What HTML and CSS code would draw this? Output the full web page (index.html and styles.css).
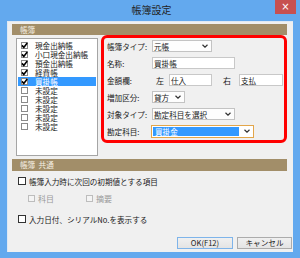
FILE: index.html
```html
<!DOCTYPE html>
<html lang="ja">
<head>
<meta charset="utf-8">
<link rel="stylesheet" href="styles.css">
</head>
<body>
<div class="window">
  <div class="titlebar">
    <span></span>
    <span class="title">帳簿設定</span>
    <span class="close">×</span>
  </div>
  <div class="client">
    <div class="bar">帳簿</div>
    <div class="top">
      <ul class="list">
        <li><span class="cb on"><svg viewBox="0 0 7 7"><polyline points="1,3.4 2.8,5.4 6.2,1"/></svg></span>現金出納帳</li>
        <li><span class="cb on"><svg viewBox="0 0 7 7"><polyline points="1,3.4 2.8,5.4 6.2,1"/></svg></span>小口現金出納帳</li>
        <li><span class="cb on"><svg viewBox="0 0 7 7"><polyline points="1,3.4 2.8,5.4 6.2,1"/></svg></span>預金出納帳</li>
        <li><span class="cb on"><svg viewBox="0 0 7 7"><polyline points="1,3.4 2.8,5.4 6.2,1"/></svg></span>経費帳</li>
        <li class="sel"><span class="cb on"><svg viewBox="0 0 7 7"><polyline points="1,3.4 2.8,5.4 6.2,1"/></svg></span>買掛帳</li>
        <li><span class="cb"></span>未設定</li>
        <li><span class="cb"></span>未設定</li>
        <li><span class="cb"></span>未設定</li>
        <li><span class="cb"></span>未設定</li>
        <li><span class="cb"></span>未設定</li>
      </ul>
      <div class="panel">
        <div class="row">
          <span class="lbl">帳簿タイプ:</span>
          <span class="select w60">元帳<svg class="arr" viewBox="0 0 6 4"><polyline points="0.5,0.8 3,3.2 5.5,0.8"/></svg></span>
        </div>
        <div class="row">
          <span class="lbl">名称:</span>
          <span class="input w83">買掛帳</span>
        </div>
        <div class="row">
          <span class="lbl">金額欄:</span>
          <span class="side">左</span>
          <span class="input w43">仕入</span>
          <span class="side right">右</span>
          <span class="input w44">支払</span>
        </div>
        <div class="row">
          <span class="lbl">増加区分:</span>
          <span class="select w33">貸方<svg class="arr" viewBox="0 0 6 4"><polyline points="0.5,0.8 3,3.2 5.5,0.8"/></svg></span>
        </div>
        <div class="row">
          <span class="lbl">対象タイプ:</span>
          <span class="select w83">勘定科目を選択<svg class="arr" viewBox="0 0 6 4"><polyline points="0.5,0.8 3,3.2 5.5,0.8"/></svg></span>
        </div>
        <div class="row">
          <span class="lbl">勘定科目:</span>
          <span class="combo"><span class="hl">買掛金</span><svg class="arr" viewBox="0 0 6 4"><polyline points="0.5,0.8 3,3.2 5.5,0.8"/></svg></span>
        </div>
      </div>
    </div>
    <div class="bar bar2">帳簿&nbsp;&nbsp;共通</div>
    <div class="chk first"><span class="box"></span>帳簿入力時に次回の初期値とする項目</div>
    <div class="subs">
      <span class="sub"><span class="box dis"></span>科目</span>
      <span class="sub"><span class="box dis"></span>摘要</span>
    </div>
    <div class="chk second"><span class="box"></span>入力日付、シリアルNo.を表示する</div>
    <div class="buttons">
      <span class="btn ok">OK(F12)</span>
      <span class="btn cancel">キャンセル</span>
    </div>
  </div>
</div>
</body>
</html>
```

FILE: styles.css
```css
* { box-sizing: border-box; }
html, body { margin: 0; padding: 0; }
body {
  width: 300px;
  height: 258px;
  overflow: hidden;
  font-family: "Noto Sans CJK JP", "Noto Sans", sans-serif;
  font-size: 8px;
  color: #1a1a1a;
}
.window {
  width: 300px;
  height: 258px;
  background: #63a9ee;
  display: flex;
  flex-direction: column;
  padding: 0 7px 6px 7px;
}
.titlebar {
  height: 21px;
  display: grid;
  grid-template-columns: 1fr auto 1fr;
  align-items: start;
  margin: 0 -3px 0 0;
}
.title {
  font-size: 10px;
  line-height: 10px;
  margin-top: 5px;
  color: #222;
}
.close {
  justify-self: end;
  width: 21px;
  height: 14px;
  background: #c75050;
  color: #fff;
  font-family: "DejaVu Sans", sans-serif;
  font-size: 10px;
  line-height: 13px;
  text-align: center;
}
.client {
  flex: 1;
  background: #f0f0f0;
  border-top: 1px solid #dfe9f4;
  border-left: 1px solid #dfe9f4;
  padding: 2px 6px 0 4px;
  display: flex;
  flex-direction: column;
}
.bar {
  height: 11px;
  background: #a28e69;
  color: #f4eee2;
  line-height: 11px;
  padding-left: 8px;
  font-size: 7.6px;
}
.bar2 {
  height: 12px;
  line-height: 12px;
  margin-top: 3px;
}
.top {
  display: flex;
  align-items: flex-start;
}
.list {
  list-style: none;
  margin: 3px 0 0 4px;
  padding: 2px 1px 0 1px;
  width: 82px;
  height: 118px;
  background: #fff;
  border: 1px solid #a5a5a5;
}
.list li {
  height: 9px;
  line-height: 9px;
  display: flex;
  align-items: center;
  font-size: 7.6px;
  padding-left: 3px;
}
.list li.sel {
  background: #3399ff;
  color: #fff;
}
.cb {
  width: 7px;
  height: 7px;
  border: 1px solid #8a8a8a;
  background: #fff;
  margin-right: 7px;
  display: inline-flex;
}
.cb svg {
  width: 7px;
  height: 7px;
  margin: -1px;
}
.cb polyline {
  fill: none;
  stroke: #000;
  stroke-width: 1.6;
}
.panel {
  margin-left: 3px;
  width: 186px;
  height: 108px;
  border: 3px solid #ff0000;
  border-radius: 6px;
  padding: 2px 0 0 3px;
  display: flex;
  flex-direction: column;
  gap: 5px;
}
.row {
  height: 12px;
  display: flex;
  align-items: center;
}
.lbl {
  width: 45px;
  font-size: 7.6px;
}
.select, .input, .combo {
  height: 12px;
  border: 1px solid #c3c3c3;
  background: #fdfdfd;
  display: flex;
  align-items: center;
  padding-left: 1px;
  font-size: 7.6px;
  position: relative;
}
.input { background: #fff; border-color: #c8c8c8; }
.select { justify-content: space-between; padding-right: 3px; }
.arr {
  width: 6px;
  height: 4px;
}
.arr polyline {
  fill: none;
  stroke: #333;
  stroke-width: 1.2;
}
.w60 { width: 60px; }
.w83 { width: 83px; }
.w43 { width: 43px; }
.w44 { width: 44px; }
.w33 { width: 33px; }
.side { margin-left: 4px; width: 13px; }
.side.right { margin-left: 11px; width: 16px; }
.combo {
  width: 103px;
  height: 13px;
  margin-left: -1px;
  border-color: #e3a64a;
  background: #fff;
  padding: 0 3px 0 1px;
  justify-content: space-between;
}
.hl {
  width: 86px;
  height: 9px;
  background: #3399ff;
  color: #fff;
  line-height: 9px;
  padding-left: 2px;
}
.chk {
  height: 10px;
  display: flex;
  align-items: center;
  font-size: 7.6px;
  padding-left: 6px;
}
.chk.first { margin-top: 5px; }
.chk.second { margin-top: 11px; }
.box {
  width: 8px;
  height: 8px;
  border: 1px solid #333;
  background: #fff;
  margin-right: 3px;
}
.box.dis {
  width: 7px;
  height: 7px;
  border-color: #bdbdbd;
  background: #f4f4f4;
}
.subs {
  margin-top: 7px;
  height: 10px;
  display: flex;
  align-items: center;
  padding-left: 16px;
  color: #9a9a9a;
}
.sub {
  display: flex;
  align-items: center;
  width: 58px;
}
.buttons {
  margin-top: 13px;
  margin-right: -5px;
  display: flex;
  justify-content: flex-end;
  gap: 4px;
}
.btn {
  height: 12px;
  border: 1px solid #acacac;
  background: linear-gradient(#f0f0f0, #e4e4e4);
  text-align: center;
  line-height: 10px;
  font-size: 7.6px;
}
.ok { width: 56px; border-color: #7eb4ea; }
.cancel { width: 55px; }
```
